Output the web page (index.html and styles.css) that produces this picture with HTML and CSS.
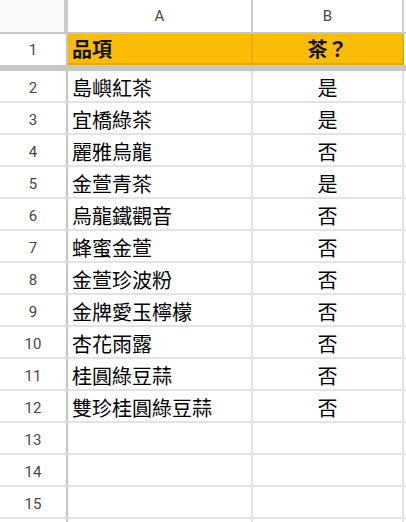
FILE: index.html
```html
<!DOCTYPE html>
<html lang="zh-Hant">
<head>
<meta charset="utf-8">
<title>Sheet</title>
<link rel="stylesheet" href="styles.css">
</head>
<body>
<div class="sheet">
  <div class="row colheads">
    <div class="cell corner"></div>
    <div class="cell colhead">A</div>
    <div class="cell colhead">B</div>
    <div class="cell filler"></div>
  </div>
  <div class="row head">
    <div class="cell rownum">1</div>
    <div class="cell hcell">品項</div>
    <div class="cell hcell center">茶？</div>
    <div class="cell filler"></div>
  </div>
  <div class="freeze"></div>
  <div class="row"><div class="cell rownum">2</div><div class="cell data">島嶼紅茶</div><div class="cell data center">是</div><div class="cell filler"></div></div>
  <div class="row"><div class="cell rownum">3</div><div class="cell data">宜橋綠茶</div><div class="cell data center">是</div><div class="cell filler"></div></div>
  <div class="row"><div class="cell rownum">4</div><div class="cell data">麗雅烏龍</div><div class="cell data center">否</div><div class="cell filler"></div></div>
  <div class="row"><div class="cell rownum">5</div><div class="cell data">金萱青茶</div><div class="cell data center">是</div><div class="cell filler"></div></div>
  <div class="row"><div class="cell rownum">6</div><div class="cell data">烏龍鐵觀音</div><div class="cell data center">否</div><div class="cell filler"></div></div>
  <div class="row"><div class="cell rownum">7</div><div class="cell data">蜂蜜金萱</div><div class="cell data center">否</div><div class="cell filler"></div></div>
  <div class="row"><div class="cell rownum">8</div><div class="cell data">金萱珍波粉</div><div class="cell data center">否</div><div class="cell filler"></div></div>
  <div class="row"><div class="cell rownum">9</div><div class="cell data">金牌愛玉檸檬</div><div class="cell data center">否</div><div class="cell filler"></div></div>
  <div class="row"><div class="cell rownum">10</div><div class="cell data">杏花雨露</div><div class="cell data center">否</div><div class="cell filler"></div></div>
  <div class="row"><div class="cell rownum">11</div><div class="cell data">桂圓綠豆蒜</div><div class="cell data center">否</div><div class="cell filler"></div></div>
  <div class="row"><div class="cell rownum">12</div><div class="cell data">雙珍桂圓綠豆蒜</div><div class="cell data center">否</div><div class="cell filler"></div></div>
  <div class="row"><div class="cell rownum">13</div><div class="cell data"></div><div class="cell data center"></div><div class="cell filler"></div></div>
  <div class="row"><div class="cell rownum">14</div><div class="cell data"></div><div class="cell data center"></div><div class="cell filler"></div></div>
  <div class="row"><div class="cell rownum">15</div><div class="cell data"></div><div class="cell data center"></div><div class="cell filler"></div></div>
  <div class="row"><div class="cell rownum"></div><div class="cell data"></div><div class="cell data center"></div><div class="cell filler"></div></div>
</div>
</body>
</html>
```

FILE: styles.css
```css
* { box-sizing: border-box; }
html, body { margin: 0; padding: 0; background: #fff; }
body { width: 406px; height: 522px; overflow: hidden; }

.sheet {
  display: flex;
  flex-direction: column;
  width: 406px;
}

.row {
  display: grid;
  grid-template-columns: 68px 185px 151px 2px;
  height: 32px;
}

.cell {
  display: flex;
  align-items: flex-end;
  border-right: 2px solid #e2e3e3;
  border-bottom: 2px solid #e2e3e3;
  overflow: hidden;
  white-space: nowrap;
}

.filler { border-right: none; }

.colheads { height: 34px; }
.colheads .cell {
  align-items: center;
  justify-content: center;
  border-bottom: 2px solid #c4c7c5;
  border-right-color: #cfd1d1;
  font-family: Roboto, "Liberation Sans", Arial, sans-serif;
  font-size: 15px;
  color: #444746;
}
.colheads .corner {
  background: #f8f9fa;
  border-right: 4px solid #c9cbcc;
}
.colheads .filler { border-right: none; }

.rownum {
  justify-content: center;
  align-items: center;
  padding-top: 4px;
  font-family: Roboto, "Liberation Sans", Arial, sans-serif;
  font-size: 15px;
  color: #444746;
  border-right: 2px solid #c4c7c5;
  border-bottom-color: #e2e3e3;
}

.head { height: 31px; }
.head .rownum {
  border-bottom: none;
  padding-top: 0;
}
.hcell {
  background: #fbbc04;
  border-right-color: #e9ad00;
  border-bottom: 2px solid #e6a900;
  align-items: center;
  padding-left: 4px;
  font-family: "Noto Sans CJK TC", "Noto Sans", sans-serif;
  font-weight: 700;
  font-size: 20px;
  line-height: 20px;
  color: #111;
}
.head .filler { border-bottom: none; }

.freeze {
  height: 6px;
  background: #c7c7c7;
}

.data {
  padding-left: 4px;
  padding-bottom: 3px;
  font-family: "Noto Sans CJK TC", "Noto Sans", sans-serif;
  font-size: 20px;
  line-height: 20px;
  color: #000;
}

.center {
  justify-content: center;
  padding-left: 0;
}
```
